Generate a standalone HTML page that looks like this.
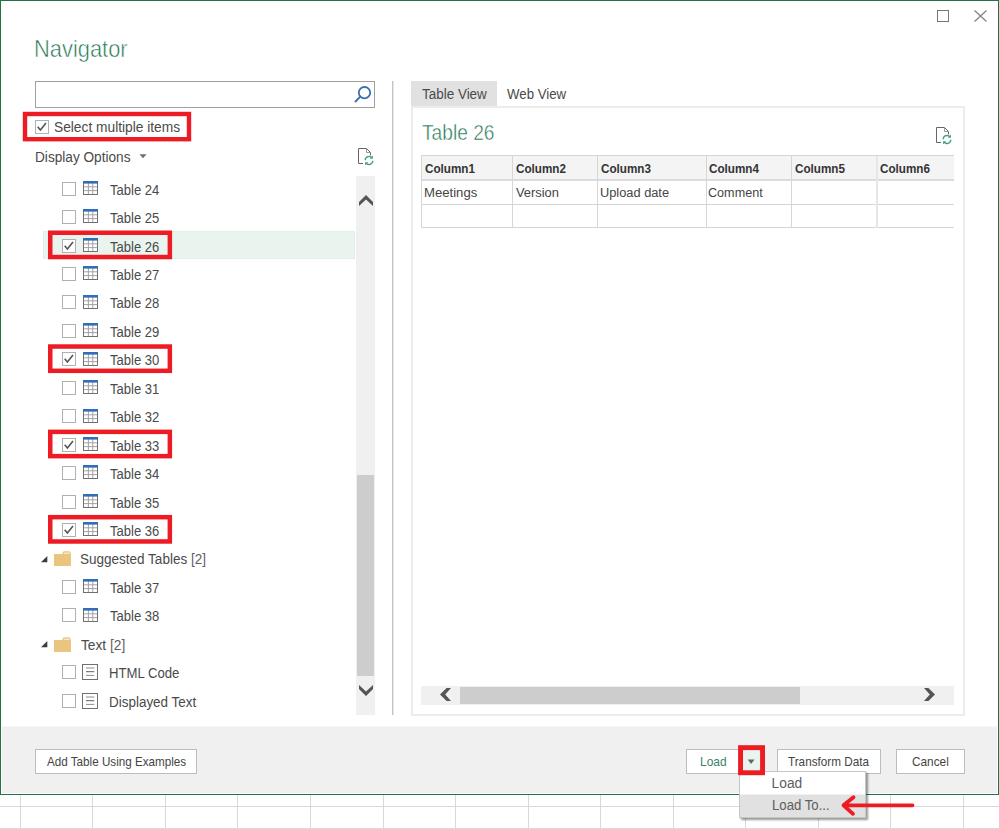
<!DOCTYPE html>
<html><head><meta charset="utf-8"><title>Navigator</title>
<style>
*{box-sizing:border-box;margin:0;padding:0}
html,body{width:999px;height:829px;overflow:hidden;background:#fff}
body{font-family:"Liberation Sans",sans-serif;color:#444;position:relative}
div,svg{position:absolute}
.gv{top:795px;width:1px;height:34px;background:#d9d9d9}
.gh{left:0;width:999px;height:1px;background:#d9d9d9}
#win{left:0;top:0;width:999px;height:795px;background:#fff;border:1px solid #217346}
#foot{left:2px;top:726px;width:995px;height:67px;background:#f0f0f0;border-top:1px solid #f6f6f6}
.t{white-space:pre;line-height:20px;transform-origin:0 0}
.sel{left:43px;width:312px;height:28px;background:#e9f4ee;border:1px solid #e3f0e9}
.btn{border:1px solid #bdbdbd;background:#fff}
.cv{top:156px;width:1px;height:72px;background:#d6d6d6}
.hl{left:421px;width:533px;height:1px;background:#d6d6d6}
</style></head><body>
<div class="gv" style="left:20px"></div><div class="gv" style="left:92px"></div><div class="gv" style="left:165px"></div><div class="gv" style="left:237px"></div><div class="gv" style="left:310px"></div><div class="gv" style="left:383px"></div><div class="gv" style="left:455px"></div><div class="gv" style="left:528px"></div><div class="gv" style="left:600px"></div><div class="gv" style="left:673px"></div><div class="gv" style="left:745px"></div><div class="gv" style="left:818px"></div><div class="gv" style="left:890px"></div><div class="gv" style="left:963px"></div>
<div class="gh" style="top:806px"></div><div class="gh" style="top:828px"></div>
<div id="win"></div>
<div id="foot"></div>

<!-- window controls -->
<svg style="left:936px;top:9px" width="14" height="14" viewBox="0 0 14 14"><rect x="1.5" y="1.5" width="11" height="11" fill="none" stroke="#767676"/></svg>
<svg style="left:973px;top:9px" width="15" height="14" viewBox="0 0 15 14"><path d="M1.5 1.5L13.5 12.5M13.5 1.5L1.5 12.5" stroke="#808080" stroke-width="1.15" fill="none"/></svg>

<div class="t" id="title" style="left:34.3px;top:38.5px;font-size:23.2px;transform:scaleX(0.943);-webkit-text-stroke:0.55px #fff;color:#1d7450">Navigator</div>

<!-- search -->
<div style="left:35px;top:81px;width:340px;height:27px;border:1px solid #a0a0a0;background:#fff"></div>
<svg style="left:352px;top:84px" width="22" height="22" viewBox="0 0 22 22"><circle cx="12.5" cy="8.7" r="5.7" fill="none" stroke="#3a6fb3" stroke-width="1.8"/><path d="M8.5 12.4L3 18" stroke="#3a6fb3" stroke-width="2" fill="none"/></svg>

<!-- select multiple -->
<svg style="left:35px;top:120px" width="16" height="16"><rect x="0.50" y="0.50" width="13" height="13" fill="#fff" stroke="#b0b0b0"/><path d="M2.70 6.70 L5.40 9.90 L11.00 3.10" fill="none" stroke="#555" stroke-width="1.6"/></svg>
<div class="t" id="selmul" style="left:53.8px;top:117.4px;font-size:14px;transform:scaleX(0.982);color:#4a4a4a">Select multiple items</div>
<svg style="left:21px;top:110px" width="172" height="33"><rect x="4.00" y="4.00" width="164.00" height="25.20" fill="none" stroke="#ed1c24" stroke-width="4.4"/></svg>

<div class="t" id="dispopt" style="left:34.5px;top:147.0px;font-size:14px;transform:scaleX(0.974);color:#4a4a4a">Display Options</div>
<svg style="left:139px;top:154px" width="8" height="5" viewBox="0 0 8 5"><path d="M0.4 0.3H7.6L4 4.2Z" fill="#707070"/></svg>

<svg style="left:357px;top:147px" width="19" height="19" viewBox="0 0 19 19"><path d="M6 16.5H1.5V1.5H9.5L13.5 5.5V8.4" fill="none" stroke="#666"/><path d="M9.5 1.5V5.5H13.5" fill="none" stroke="#999"/><path d="M8.2 13.2A3.8 3.8 0 0 1 15 11M15.8 13.8A3.8 3.8 0 0 1 9 16" fill="none" stroke="#45a07a" stroke-width="1.35"/><path d="M15.9 8.6V11.7H12.8Z M8.1 18.4V15.3H11.2Z" fill="#45a07a"/></svg>

<!-- tree -->
<svg style="left:62px;top:182px" width="16" height="16"><rect x="0.50" y="0.50" width="13" height="13" fill="#fff" stroke="#b0b0b0"/></svg>
<svg style="left:83px;top:181px" width="15" height="14" viewBox="0 0 15 14"><rect x="0.5" y="0.5" width="14" height="13" fill="#fff" stroke="#707070"/><path d="M1 5.8H14M1 9.6H14M5.4 2V13M9.8 2V13" stroke="#a3a3a3" fill="none"/><rect x="0" y="0" width="15" height="2.6" fill="#2f6fba"/></svg>
<div class="t" id="r0" style="left:110.3px;top:179.6px;font-size:14px;transform:scaleX(0.932);color:#4a4a4a">Table 24</div>
<svg style="left:62px;top:210px" width="16" height="16"><rect x="0.50" y="0.50" width="13" height="13" fill="#fff" stroke="#b0b0b0"/></svg>
<svg style="left:83px;top:209px" width="15" height="14" viewBox="0 0 15 14"><rect x="0.5" y="0.5" width="14" height="13" fill="#fff" stroke="#707070"/><path d="M1 5.8H14M1 9.6H14M5.4 2V13M9.8 2V13" stroke="#a3a3a3" fill="none"/><rect x="0" y="0" width="15" height="2.6" fill="#2f6fba"/></svg>
<div class="t" id="r1" style="left:110.3px;top:208.1px;font-size:14px;transform:scaleX(0.932);color:#4a4a4a">Table 25</div>
<div class="sel" style="top:231px"></div>
<svg style="left:62px;top:239px" width="16" height="16"><rect x="0.50" y="0.50" width="13" height="13" fill="#fff" stroke="#b0b0b0"/><path d="M2.70 6.70 L5.40 9.90 L11.00 3.10" fill="none" stroke="#555" stroke-width="1.6"/></svg>
<svg style="left:83px;top:238px" width="15" height="14" viewBox="0 0 15 14"><rect x="0.5" y="0.5" width="14" height="13" fill="#fff" stroke="#707070"/><path d="M1 5.8H14M1 9.6H14M5.4 2V13M9.8 2V13" stroke="#a3a3a3" fill="none"/><rect x="0" y="0" width="15" height="2.6" fill="#2f6fba"/></svg>
<div class="t" id="r2" style="left:110.3px;top:236.5px;font-size:14px;transform:scaleX(0.932);color:#4a4a4a">Table 26</div>
<svg style="left:47px;top:229px" width="127" height="32"><rect x="3.25" y="3.74" width="119.60" height="24.30" fill="none" stroke="#ed1c24" stroke-width="4.5"/></svg>
<svg style="left:62px;top:267px" width="16" height="16"><rect x="0.50" y="0.50" width="13" height="13" fill="#fff" stroke="#b0b0b0"/></svg>
<svg style="left:83px;top:266px" width="15" height="14" viewBox="0 0 15 14"><rect x="0.5" y="0.5" width="14" height="13" fill="#fff" stroke="#707070"/><path d="M1 5.8H14M1 9.6H14M5.4 2V13M9.8 2V13" stroke="#a3a3a3" fill="none"/><rect x="0" y="0" width="15" height="2.6" fill="#2f6fba"/></svg>
<div class="t" id="r3" style="left:110.3px;top:265.0px;font-size:14px;transform:scaleX(0.932);color:#4a4a4a">Table 27</div>
<svg style="left:62px;top:295px" width="16" height="16"><rect x="0.50" y="0.50" width="13" height="13" fill="#fff" stroke="#b0b0b0"/></svg>
<svg style="left:83px;top:295px" width="15" height="14" viewBox="0 0 15 14"><rect x="0.5" y="0.5" width="14" height="13" fill="#fff" stroke="#707070"/><path d="M1 5.8H14M1 9.6H14M5.4 2V13M9.8 2V13" stroke="#a3a3a3" fill="none"/><rect x="0" y="0" width="15" height="2.6" fill="#2f6fba"/></svg>
<div class="t" id="r4" style="left:110.3px;top:293.4px;font-size:14px;transform:scaleX(0.932);color:#4a4a4a">Table 28</div>
<svg style="left:62px;top:324px" width="16" height="16"><rect x="0.50" y="0.50" width="13" height="13" fill="#fff" stroke="#b0b0b0"/></svg>
<svg style="left:83px;top:323px" width="15" height="14" viewBox="0 0 15 14"><rect x="0.5" y="0.5" width="14" height="13" fill="#fff" stroke="#707070"/><path d="M1 5.8H14M1 9.6H14M5.4 2V13M9.8 2V13" stroke="#a3a3a3" fill="none"/><rect x="0" y="0" width="15" height="2.6" fill="#2f6fba"/></svg>
<div class="t" id="r5" style="left:110.3px;top:321.9px;font-size:14px;transform:scaleX(0.932);color:#4a4a4a">Table 29</div>
<svg style="left:62px;top:352px" width="16" height="16"><rect x="0.50" y="0.50" width="13" height="13" fill="#fff" stroke="#b0b0b0"/><path d="M2.70 6.70 L5.40 9.90 L11.00 3.10" fill="none" stroke="#555" stroke-width="1.6"/></svg>
<svg style="left:83px;top:352px" width="15" height="14" viewBox="0 0 15 14"><rect x="0.5" y="0.5" width="14" height="13" fill="#fff" stroke="#707070"/><path d="M1 5.8H14M1 9.6H14M5.4 2V13M9.8 2V13" stroke="#a3a3a3" fill="none"/><rect x="0" y="0" width="15" height="2.6" fill="#2f6fba"/></svg>
<div class="t" id="r6" style="left:110.3px;top:350.3px;font-size:14px;transform:scaleX(0.932);color:#4a4a4a">Table 30</div>
<svg style="left:47px;top:343px" width="127" height="32"><rect x="3.25" y="3.52" width="119.60" height="24.30" fill="none" stroke="#ed1c24" stroke-width="4.5"/></svg>
<svg style="left:62px;top:381px" width="16" height="16"><rect x="0.50" y="0.50" width="13" height="13" fill="#fff" stroke="#b0b0b0"/></svg>
<svg style="left:83px;top:380px" width="15" height="14" viewBox="0 0 15 14"><rect x="0.5" y="0.5" width="14" height="13" fill="#fff" stroke="#707070"/><path d="M1 5.8H14M1 9.6H14M5.4 2V13M9.8 2V13" stroke="#a3a3a3" fill="none"/><rect x="0" y="0" width="15" height="2.6" fill="#2f6fba"/></svg>
<div class="t" id="r7" style="left:110.3px;top:378.8px;font-size:14px;transform:scaleX(0.932);color:#4a4a4a">Table 31</div>
<svg style="left:62px;top:409px" width="16" height="16"><rect x="0.50" y="0.50" width="13" height="13" fill="#fff" stroke="#b0b0b0"/></svg>
<svg style="left:83px;top:409px" width="15" height="14" viewBox="0 0 15 14"><rect x="0.5" y="0.5" width="14" height="13" fill="#fff" stroke="#707070"/><path d="M1 5.8H14M1 9.6H14M5.4 2V13M9.8 2V13" stroke="#a3a3a3" fill="none"/><rect x="0" y="0" width="15" height="2.6" fill="#2f6fba"/></svg>
<div class="t" id="r8" style="left:110.3px;top:407.2px;font-size:14px;transform:scaleX(0.932);color:#4a4a4a">Table 32</div>
<svg style="left:62px;top:438px" width="16" height="16"><rect x="0.50" y="0.50" width="13" height="13" fill="#fff" stroke="#b0b0b0"/><path d="M2.70 6.70 L5.40 9.90 L11.00 3.10" fill="none" stroke="#555" stroke-width="1.6"/></svg>
<svg style="left:83px;top:437px" width="15" height="14" viewBox="0 0 15 14"><rect x="0.5" y="0.5" width="14" height="13" fill="#fff" stroke="#707070"/><path d="M1 5.8H14M1 9.6H14M5.4 2V13M9.8 2V13" stroke="#a3a3a3" fill="none"/><rect x="0" y="0" width="15" height="2.6" fill="#2f6fba"/></svg>
<div class="t" id="r9" style="left:110.3px;top:435.6px;font-size:14px;transform:scaleX(0.932);color:#4a4a4a">Table 33</div>
<svg style="left:47px;top:428px" width="127" height="32"><rect x="3.25" y="3.85" width="119.60" height="24.30" fill="none" stroke="#ed1c24" stroke-width="4.5"/></svg>
<svg style="left:62px;top:466px" width="16" height="16"><rect x="0.50" y="0.50" width="13" height="13" fill="#fff" stroke="#b0b0b0"/></svg>
<svg style="left:83px;top:465px" width="15" height="14" viewBox="0 0 15 14"><rect x="0.5" y="0.5" width="14" height="13" fill="#fff" stroke="#707070"/><path d="M1 5.8H14M1 9.6H14M5.4 2V13M9.8 2V13" stroke="#a3a3a3" fill="none"/><rect x="0" y="0" width="15" height="2.6" fill="#2f6fba"/></svg>
<div class="t" id="r10" style="left:110.3px;top:464.1px;font-size:14px;transform:scaleX(0.932);color:#4a4a4a">Table 34</div>
<svg style="left:62px;top:495px" width="16" height="16"><rect x="0.50" y="0.50" width="13" height="13" fill="#fff" stroke="#b0b0b0"/></svg>
<svg style="left:83px;top:494px" width="15" height="14" viewBox="0 0 15 14"><rect x="0.5" y="0.5" width="14" height="13" fill="#fff" stroke="#707070"/><path d="M1 5.8H14M1 9.6H14M5.4 2V13M9.8 2V13" stroke="#a3a3a3" fill="none"/><rect x="0" y="0" width="15" height="2.6" fill="#2f6fba"/></svg>
<div class="t" id="r11" style="left:110.3px;top:492.5px;font-size:14px;transform:scaleX(0.932);color:#4a4a4a">Table 35</div>
<svg style="left:62px;top:523px" width="16" height="16"><rect x="0.50" y="0.50" width="13" height="13" fill="#fff" stroke="#b0b0b0"/><path d="M2.70 6.70 L5.40 9.90 L11.00 3.10" fill="none" stroke="#555" stroke-width="1.6"/></svg>
<svg style="left:83px;top:522px" width="15" height="14" viewBox="0 0 15 14"><rect x="0.5" y="0.5" width="14" height="13" fill="#fff" stroke="#707070"/><path d="M1 5.8H14M1 9.6H14M5.4 2V13M9.8 2V13" stroke="#a3a3a3" fill="none"/><rect x="0" y="0" width="15" height="2.6" fill="#2f6fba"/></svg>
<div class="t" id="r12" style="left:110.3px;top:521.0px;font-size:14px;transform:scaleX(0.932);color:#4a4a4a">Table 36</div>
<svg style="left:47px;top:513px" width="127" height="32"><rect x="3.25" y="4.18" width="119.60" height="24.30" fill="none" stroke="#ed1c24" stroke-width="4.5"/></svg>
<svg style="left:41px;top:556px" width="8" height="8" viewBox="0 0 8 8"><path d="M6.3 0V6.3H0Z" fill="#3c3c3c"/></svg>
<svg style="left:54px;top:551px" width="17" height="15" viewBox="0 0 17 15"><path d="M0 3 L0 15 L17 15 L17 2.4 L15.6 0.3 L9.6 0.3 L8 3 Z" fill="#ebc57f"/><path d="M10.3 1.4 L15.2 1.4 L16.2 3 L9.4 3Z" fill="#f6e6c6"/></svg>
<div class="t" id="r13" style="left:80.0px;top:549.4px;font-size:14px;transform:scaleX(0.965);color:#4a4a4a">Suggested Tables <span style="color:#606060">[2]</span></div>
<svg style="left:62px;top:580px" width="16" height="16"><rect x="0.50" y="0.50" width="13" height="13" fill="#fff" stroke="#b0b0b0"/></svg>
<svg style="left:83px;top:579px" width="15" height="14" viewBox="0 0 15 14"><rect x="0.5" y="0.5" width="14" height="13" fill="#fff" stroke="#707070"/><path d="M1 5.8H14M1 9.6H14M5.4 2V13M9.8 2V13" stroke="#a3a3a3" fill="none"/><rect x="0" y="0" width="15" height="2.6" fill="#2f6fba"/></svg>
<div class="t" id="r14" style="left:110.3px;top:577.9px;font-size:14px;transform:scaleX(0.932);color:#4a4a4a">Table 37</div>
<svg style="left:62px;top:608px" width="16" height="16"><rect x="0.50" y="0.50" width="13" height="13" fill="#fff" stroke="#b0b0b0"/></svg>
<svg style="left:83px;top:608px" width="15" height="14" viewBox="0 0 15 14"><rect x="0.5" y="0.5" width="14" height="13" fill="#fff" stroke="#707070"/><path d="M1 5.8H14M1 9.6H14M5.4 2V13M9.8 2V13" stroke="#a3a3a3" fill="none"/><rect x="0" y="0" width="15" height="2.6" fill="#2f6fba"/></svg>
<div class="t" id="r15" style="left:110.3px;top:606.3px;font-size:14px;transform:scaleX(0.932);color:#4a4a4a">Table 38</div>
<svg style="left:41px;top:641px" width="8" height="8" viewBox="0 0 8 8"><path d="M6.3 0V6.3H0Z" fill="#3c3c3c"/></svg>
<svg style="left:54px;top:637px" width="17" height="15" viewBox="0 0 17 15"><path d="M0 3 L0 15 L17 15 L17 2.4 L15.6 0.3 L9.6 0.3 L8 3 Z" fill="#ebc57f"/><path d="M10.3 1.4 L15.2 1.4 L16.2 3 L9.4 3Z" fill="#f6e6c6"/></svg>
<div class="t" id="r16" style="left:81.0px;top:634.8px;font-size:14px;transform:scaleX(0.980);color:#4a4a4a">Text <span style="color:#606060">[2]</span></div>
<svg style="left:62px;top:665px" width="16" height="16"><rect x="0.50" y="0.50" width="13" height="13" fill="#fff" stroke="#b0b0b0"/></svg>
<svg style="left:82px;top:664px" width="16" height="16" viewBox="0 0 16 16"><rect x="0.5" y="0.5" width="15" height="15" fill="#fff" stroke="#707070"/><path d="M4 4H12.3M4 11.4H12.3" stroke="#8e8e8e" fill="none"/><path d="M4 7.7H12.3" stroke="#5e5e5e" fill="none"/></svg>
<div class="t" id="r17" style="left:109.4px;top:663.2px;font-size:14px;transform:scaleX(0.939);color:#4a4a4a">HTML Code</div>
<svg style="left:62px;top:694px" width="16" height="16"><rect x="0.50" y="0.50" width="13" height="13" fill="#fff" stroke="#b0b0b0"/></svg>
<svg style="left:82px;top:693px" width="16" height="16" viewBox="0 0 16 16"><rect x="0.5" y="0.5" width="15" height="15" fill="#fff" stroke="#707070"/><path d="M4 4H12.3M4 11.4H12.3" stroke="#8e8e8e" fill="none"/><path d="M4 7.7H12.3" stroke="#5e5e5e" fill="none"/></svg>
<div class="t" id="r18" style="left:109.3px;top:691.6px;font-size:14px;transform:scaleX(0.961);color:#4a4a4a">Displayed Text</div>

<!-- left scrollbar -->
<div style="left:356px;top:176px;width:19px;height:539px;background:#f0f0f0"></div>
<div style="left:357px;top:475px;width:17px;height:201px;background:#cdcdcd"></div>
<svg style="left:359px;top:195px" width="14" height="11" viewBox="0 0 14 11"><path d="M7 0L14 7V11L7 4.4L0 11V7Z" fill="#555"/></svg>
<svg style="left:359px;top:685px" width="14" height="11" viewBox="0 0 14 11"><path d="M7 11L14 4V0L7 6.6L0 0V4Z" fill="#555"/></svg>

<!-- divider -->
<div style="left:392px;top:81px;width:1px;height:634px;background:#c4c4c4"></div>
<div style="left:393px;top:81px;width:1px;height:634px;background:#e6e6e6"></div>

<!-- tabs -->
<div style="left:411px;top:81px;width:86px;height:26px;background:#e1e1e1"></div>
<div class="t" id="tab1" style="left:421.6px;top:84.4px;font-size:14px;transform:scaleX(0.961);color:#4a4a4a">Table View</div>
<div class="t" id="tab2" style="left:507.4px;top:84.4px;font-size:14px;transform:scaleX(0.946);color:#4a4a4a">Web View</div>
<div style="left:411px;top:106px;width:554px;height:610px;border:2px solid #ececec;background:#fff"></div>
<div class="t" id="ptitle" style="left:421.8px;top:123.1px;font-size:21.8px;transform:scaleX(0.880);-webkit-text-stroke:0.5px #fff;color:#1d7450">Table 26</div>
<svg style="left:935px;top:126px" width="19" height="19" viewBox="0 0 19 19"><path d="M6 16.5H1.5V1.5H9.5L13.5 5.5V8.4" fill="none" stroke="#666"/><path d="M9.5 1.5V5.5H13.5" fill="none" stroke="#999"/><path d="M8.2 13.2A3.8 3.8 0 0 1 15 11M15.8 13.8A3.8 3.8 0 0 1 9 16" fill="none" stroke="#45a07a" stroke-width="1.35"/><path d="M15.9 8.6V11.7H12.8Z M8.1 18.4V15.3H11.2Z" fill="#45a07a"/></svg>

<!-- preview table -->
<div style="left:421px;top:156px;width:533px;height:24px;background:#f4f4f4"></div>
<div class="hl" style="top:155px"></div><div class="hl" style="top:179px;height:2px;background:#dcdcdc"></div><div class="hl" style="top:204px"></div><div class="hl" style="top:227px"></div>
<div class="cv" style="left:421px"></div><div class="t" id="h0" style="left:424.6px;top:158.7px;font-size:12.2px;font-weight:700;transform:scaleX(0.958);color:#333">Column1</div><div class="t" id="c0" style="left:423.5px;top:183.1px;font-size:12px;transform:scaleX(1.094);color:#444">Meetings</div><div class="cv" style="left:512px"></div><div class="t" id="h1" style="left:515.6px;top:158.7px;font-size:12.2px;font-weight:700;transform:scaleX(0.958);color:#333">Column2</div><div class="t" id="c1" style="left:515.6px;top:183.1px;font-size:12px;transform:scaleX(1.072);color:#444">Version</div><div class="cv" style="left:597px"></div><div class="t" id="h2" style="left:601.4px;top:158.7px;font-size:12.2px;font-weight:700;transform:scaleX(0.958);color:#333">Column3</div><div class="t" id="c2" style="left:600.3px;top:183.1px;font-size:12px;transform:scaleX(1.067);color:#444">Upload date</div><div class="cv" style="left:706px"></div><div class="t" id="h3" style="left:709.4px;top:158.7px;font-size:12.2px;font-weight:700;transform:scaleX(0.958);color:#333">Column4</div><div class="t" id="c3" style="left:708.3px;top:183.1px;font-size:12px;transform:scaleX(1.051);color:#444">Comment</div><div class="cv" style="left:791px"></div><div class="t" id="h4" style="left:795.0px;top:158.7px;font-size:12.2px;font-weight:700;transform:scaleX(0.958);color:#333">Column5</div><div class="cv" style="left:876px;width:2px;background:#e6e6e6"></div><div class="t" id="h5" style="left:880.4px;top:158.7px;font-size:12.2px;font-weight:700;transform:scaleX(0.958);color:#333">Column6</div>

<!-- h scrollbar -->
<div style="left:421px;top:686px;width:533px;height:19px;background:#f0f0f0"></div>
<div style="left:460px;top:687px;width:340px;height:17px;background:#cdcdcd"></div>
<svg style="left:440px;top:688px" width="11" height="13" viewBox="0 0 11 13"><path d="M0 6.5L6.6 0H11L5.2 6.5L11 13H6.6Z" fill="#555"/></svg>
<svg style="left:924px;top:688px" width="11" height="13" viewBox="0 0 11 13"><path d="M11 6.5L4.4 0H0L5.8 6.5L0 13H4.4Z" fill="#555"/></svg>

<!-- buttons -->
<div class="btn" style="left:35px;top:749px;width:162px;height:25px"></div>
<div class="t" id="b1" style="left:46.6px;top:752.2px;font-size:12.2px;transform:scaleX(0.957);color:#444">Add Table Using Examples</div>
<div class="btn" style="left:686px;top:749px;width:78px;height:25px"></div>
<div class="t" id="b2" style="left:700.4px;top:752.2px;font-size:12.2px;transform:scaleX(0.984);color:#3a8264">Load</div>
<div style="left:742px;top:750px;width:19px;height:22px;background:#e9f4ee"></div>
<svg style="left:747px;top:759px" width="9" height="6" viewBox="0 0 9 6"><path d="M0.7 0.6H7.5L4.1 4.9Z" fill="#666"/></svg>
<div class="btn" style="left:777px;top:749px;width:104px;height:25px"></div>
<div class="t" id="b3" style="left:788.0px;top:752.2px;font-size:12.2px;transform:scaleX(0.961);color:#444">Transform Data</div>
<div class="btn" style="left:896px;top:749px;width:69px;height:25px"></div>
<div class="t" id="b4" style="left:911.5px;top:752.2px;font-size:12.2px;transform:scaleX(0.969);color:#444">Cancel</div>

<!-- dropdown -->
<div style="left:739px;top:771px;width:127px;height:47px;background:#fff;border:1px solid #c6c6c6;box-shadow:2px 2px 2px rgba(0,0,0,0.4)"></div>
<div style="left:740px;top:794px;width:125px;height:23px;background:#e1e1e1;border-top:1px solid #f0f0f0"></div>
<div class="t" id="m1" style="left:771.6px;top:774.1px;font-size:13.8px;color:#5e5e5e">Load</div>
<div class="t" id="m2" style="left:771.6px;top:795.8px;font-size:13.8px;transform:scaleX(0.955);color:#5e5e5e">Load To...</div>
<svg style="left:737px;top:744px" width="29" height="33"><rect x="3.55" y="3.65" width="22.00" height="25.10" fill="none" stroke="#ed1c24" stroke-width="4.9"/></svg>
<svg style="left:838px;top:792px" width="80" height="26" viewBox="0 0 80 26"><path d="M74.5 13.3H7M15.5 5.2L5.5 13.3L15 21.8" fill="none" stroke="#ed1c24" stroke-width="3.8" stroke-linecap="round" stroke-linejoin="round"/></svg>
</body></html>
